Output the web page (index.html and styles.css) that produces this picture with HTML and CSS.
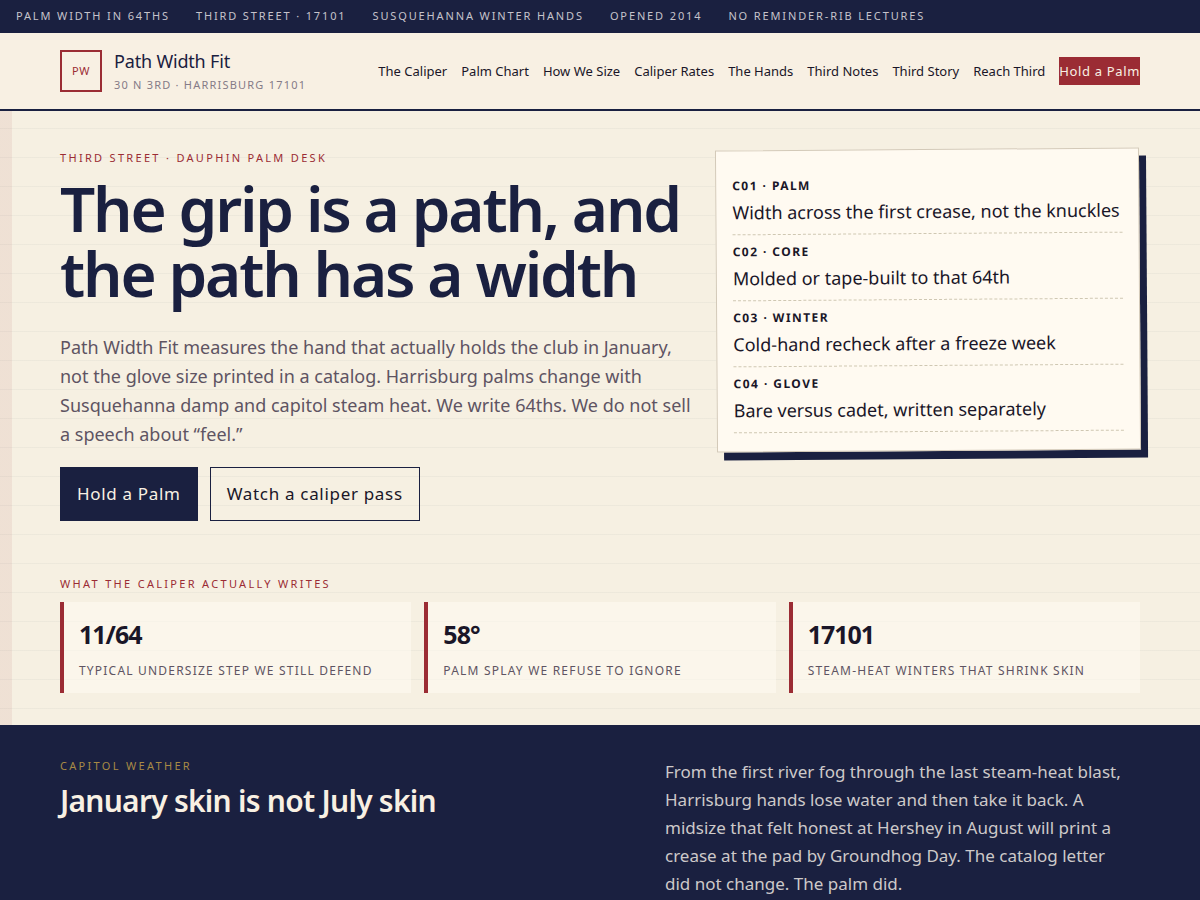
FILE: index.html
```html
<!DOCTYPE html>
<html lang="en">
<head>
    <meta charset="UTF-8">
    <meta name="viewport" content="width=device-width, initial-scale=1.0">
    <title>Path Width Fit</title>
    <link rel="stylesheet" href="styles.css">
</head>
<body>
    <div class="ticker">
        <span>Palm width in 64ths</span>
        <span>Third Street · 17101</span>
        <span>Susquehanna winter hands</span>
        <span>Opened 2014</span>
        <span>No reminder-rib lectures</span>
    </div>

    <header class="site-header">
        <div class="wrap header-row">
            <a class="brand" href="#top">
                <span class="brand-mark">PW</span>
                <span class="brand-text">
                    <span class="brand-name">Path Width Fit</span>
                    <span class="brand-sub">30 N 3rd · Harrisburg 17101</span>
                </span>
            </a>
            <nav class="site-nav">
                <a href="#caliper">The Caliper</a>
                <a href="#chart">Palm Chart</a>
                <a href="#size">How We Size</a>
                <a href="#rates">Caliper Rates</a>
                <a href="#hands">The Hands</a>
                <a href="#notes">Third Notes</a>
                <a href="#story">Third Story</a>
                <a href="#reach">Reach Third</a>
                <a class="nav-cta" href="#hold">Hold a Palm</a>
            </nav>
        </div>
    </header>

    <main class="paper" id="top">
        <section class="wrap hero">
            <div class="hero-copy">
                <p class="kicker">Third Street · Dauphin palm desk</p>
                <h1>The grip is a path, and the path has a width</h1>
                <p class="lead">Path Width Fit measures the hand that actually holds the club in January, not the glove size printed in a catalog. Harrisburg palms change with Susquehanna damp and capitol steam heat. We write 64ths. We do not sell a speech about “feel.”</p>
                <div class="actions">
                    <a class="btn btn-solid" href="#hold">Hold a Palm</a>
                    <a class="btn btn-line" href="#caliper">Watch a caliper pass</a>
                </div>
            </div>
            <ul class="card">
                <li><b>C01 · Palm</b>Width across the first crease, not the knuckles</li>
                <li><b>C02 · Core</b>Molded or tape-built to that 64th</li>
                <li><b>C03 · Winter</b>Cold-hand recheck after a freeze week</li>
                <li><b>C04 · Glove</b>Bare versus cadet, written separately</li>
            </ul>
        </section>

        <section class="wrap figures">
            <p class="kicker">What the caliper actually writes</p>
            <div class="figure-grid">
                <div class="figure"><strong>11/64</strong><span>Typical undersize step we still defend</span></div>
                <div class="figure"><strong>58°</strong><span>Palm splay we refuse to ignore</span></div>
                <div class="figure"><strong>17101</strong><span>Steam-heat winters that shrink skin</span></div>
            </div>
        </section>
    </main>

    <section class="weather">
        <div class="wrap weather-row">
            <div>
                <p class="kicker kicker-gold">Capitol weather</p>
                <h2>January skin is not July skin</h2>
            </div>
            <p class="weather-text">From the first river fog through the last steam-heat blast, Harrisburg hands lose water and then take it back. A midsize that felt honest at Hershey in August will print a crease at the pad by Groundhog Day. The catalog letter did not change. The palm did.</p>
        </div>
    </section>
</body>
</html>
```
FILE: styles.css
```css
* {
    margin: 0;
    padding: 0;
    box-sizing: border-box;
}

:root {
    --navy: #1a2040;
    --ink: #1a1628;
    --red: #9b2c34;
    --cream: #f8f0e3;
    --muted: #5e5462;
}

body {
    font-family: "Noto Sans", sans-serif;
    font-size: 18px;
    line-height: 28px;
    color: var(--ink);
    background: #f6f0e2;
}

a {
    color: inherit;
    text-decoration: none;
}

.wrap {
    max-width: 1200px;
    margin: 0 auto;
    padding: 0 60px;
}

/* Top strip */
.ticker {
    display: flex;
    flex-wrap: wrap;
    gap: 0 26px;
    padding: 7px 16px 9px;
    font-size: 11px;
    line-height: 17px;
    letter-spacing: 0.17em;
    text-transform: uppercase;
    color: #c6c3cb;
    background: var(--navy);
}

/* Header */
.site-header {
    background: var(--cream);
    border-bottom: 2px solid var(--navy);
}

.header-row {
    display: flex;
    justify-content: space-between;
    align-items: center;
    padding-top: 14px;
    padding-bottom: 14px;
}

.brand {
    display: flex;
    align-items: center;
    gap: 12px;
}

.brand-mark {
    display: grid;
    place-items: center;
    width: 42px;
    height: 42px;
    border: 2px solid var(--red);
    color: var(--red);
    font-size: 11px;
    letter-spacing: 0.06em;
}

.brand-text {
    display: flex;
    flex-direction: column;
}

.brand-name {
    font-size: 18px;
    line-height: 28px;
    letter-spacing: -0.01em;
    color: var(--navy);
}

.brand-sub {
    font-size: 11px;
    line-height: 20px;
    letter-spacing: 0.11em;
    text-transform: uppercase;
    color: #857b87;
}

.site-nav {
    display: flex;
    align-items: center;
    gap: 14px;
    font-size: 13px;
    line-height: 28px;
}

.nav-cta {
    background: var(--red);
    color: var(--cream);
    letter-spacing: 0.05em;
}

/* Ruled paper with a margin stripe down the left edge */
.paper {
    background:
        linear-gradient(90deg, rgba(155, 44, 52, 0.08) 12px, transparent 12px),
        linear-gradient(rgba(26, 32, 64, 0.04) 1px, transparent 1px) 0 17px / 100% 29px,
        #f6f0e2;
}

.hero {
    display: grid;
    grid-template-columns: 3fr 2fr;
    gap: 20px;
    align-items: start;
    padding-top: 37px;
    padding-bottom: 53px;
}

.kicker {
    font-size: 11px;
    line-height: 20px;
    letter-spacing: 0.21em;
    text-transform: uppercase;
    color: var(--red);
}

h1 {
    margin: 8px 0 27px;
    font-size: 62px;
    line-height: 65px;
    font-weight: 600;
    letter-spacing: -0.035em;
    color: var(--navy);
}

.lead {
    line-height: 29px;
    color: var(--muted);
}

.actions {
    display: flex;
    flex-wrap: wrap;
    gap: 12px;
    margin-top: 18px;
}

.btn {
    padding: 12px 16px;
    border: 1px solid var(--navy);
    font-size: 17px;
    letter-spacing: 0.04em;
}

.btn-solid {
    background: var(--navy);
    color: var(--cream);
}

/* Tilted spec card */
.card {
    list-style: none;
    margin-top: 1px;
    padding: 18px 16px;
    background: #fffaf1;
    border: 1px solid #d3c9b8;
    box-shadow: 7px 8px 0 var(--navy);
    transform: rotate(-0.4deg);
}

.card li {
    padding: 4px 0 8px;
    border-bottom: 1px dashed #cfc7b2;
}

.card b {
    display: block;
    font-size: 12px;
    line-height: 25px;
    letter-spacing: 0.12em;
    text-transform: uppercase;
}

/* Figures */
.figures {
    padding-bottom: 32px;
}

.figure-grid {
    display: grid;
    grid-template-columns: repeat(3, 1fr);
    gap: 13px;
    margin-top: 8px;
}

.figure {
    padding: 15px 15px 12px;
    border-left: 4px solid var(--red);
    background: rgba(255, 252, 243, 0.55);
}

.figure strong {
    display: block;
    margin-bottom: 9px;
    font-size: 25px;
    line-height: 35px;
    letter-spacing: -0.04em;
}

.figure span {
    display: block;
    font-size: 12px;
    line-height: 20px;
    letter-spacing: 0.1em;
    text-transform: uppercase;
    color: var(--muted);
}

/* Dark band */
.weather {
    padding: 31px 0 40px;
    background: var(--navy);
    color: #cdc9c9;
}

.weather-row {
    display: grid;
    grid-template-columns: 6fr 5fr;
    gap: 35px;
}

.weather-text {
    max-width: 468px;
    padding-top: 2px;
    font-size: 17px;
}

.kicker-gold {
    color: #a88a45;
}

.weather h2 {
    font-size: 30px;
    line-height: 50px;
    font-weight: 600;
    letter-spacing: -0.025em;
    color: var(--cream);
}
```
